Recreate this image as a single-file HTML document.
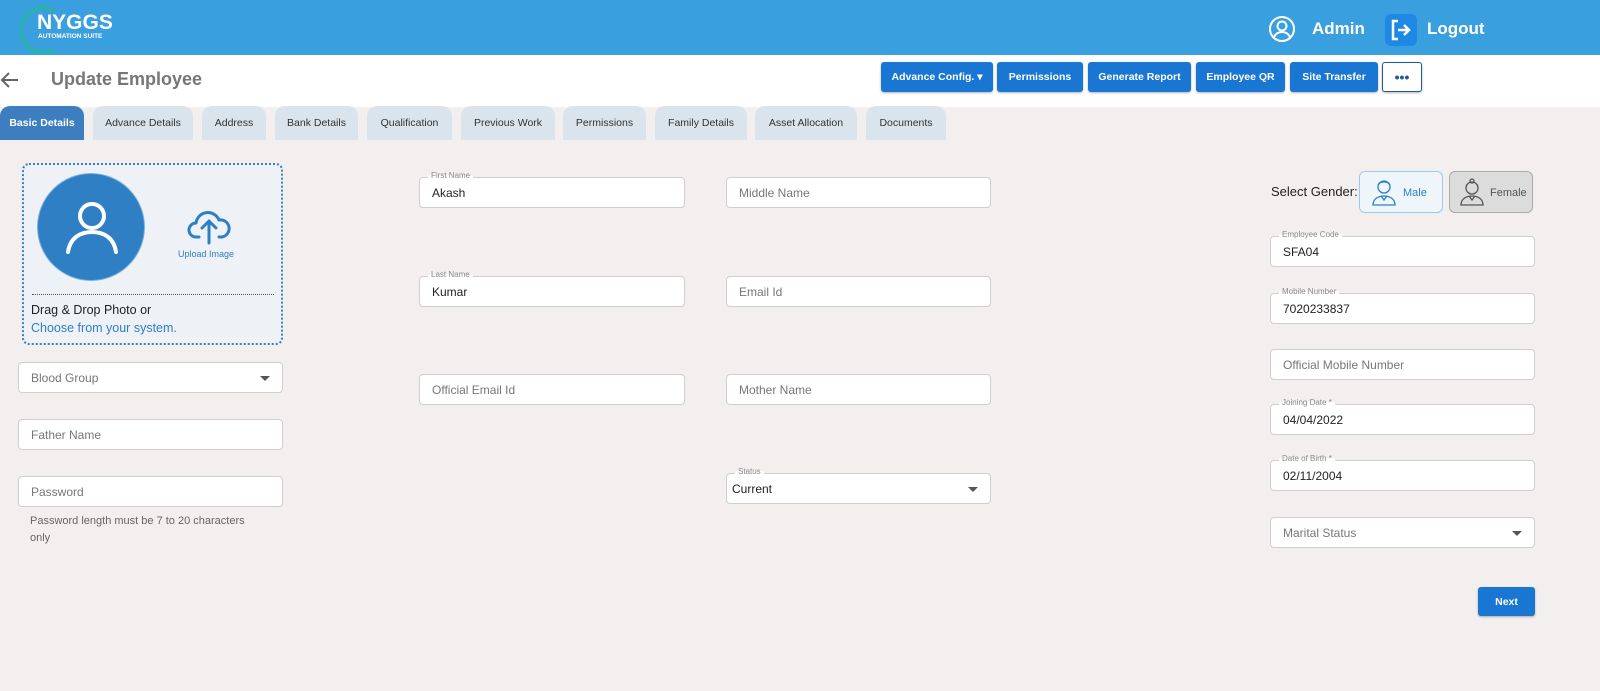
<!DOCTYPE html>
<html><head><meta charset="utf-8"><style>
*{box-sizing:border-box;margin:0;padding:0}
body{width:1600px;height:691px;overflow:hidden;background:#f4efef;font-family:"Liberation Sans",Arial,sans-serif;position:relative;color:#333}
.a{position:absolute}
.hdr{left:0;top:0;width:1600px;height:55px;background:#3a9fdf}
.band{left:0;top:55px;width:1600px;height:52px;background:#fff}
.btn{position:absolute;top:62px;height:30px;background:#1976d2;color:#fff;font-size:10.5px;font-weight:bold;border-radius:3px;display:flex;align-items:center;justify-content:center;box-shadow:0 1px 2px rgba(0,0,0,.3)}
.tab{position:absolute;top:106px;height:34px;background:#dae4ec;border-radius:10px 10px 0 0;font-size:10.5px;color:#333;display:flex;align-items:center;justify-content:center}
.in{position:absolute;height:31px;background:#fff;border:1px solid #cfcfcf;border-radius:4px;font-size:12px;color:#777;padding-left:12px;display:flex;align-items:center}
.in.v{color:#222}
.lbl{position:absolute;top:-7px;left:8px;font-size:8px;color:#888;background:linear-gradient(#f4efef 50%,#fff 50%);padding:0 3px}
.dd::after{content:"";position:absolute;right:12px;top:13px;border:5px solid transparent;border-top:5px solid #555}
</style></head><body>
<div class="a hdr"></div>
<svg class="a" style="left:20px;top:5px" width="40" height="48" viewBox="0 0 40 48"><path d="M34 6 A22 22 0 1 0 34 44" fill="none" stroke="#1ec27a" stroke-width="3" stroke-dasharray="4 2"/></svg>
<div class="a" style="left:37px;top:11px;color:#fff;font-size:21px;font-weight:bold">NYGGS</div>
<div class="a" style="left:38px;top:33px;color:#fff;font-size:6.5px;font-weight:bold">AUTOMATION SUITE</div>
<svg class="a" style="left:1268px;top:15px" width="28" height="28" viewBox="0 0 28 28" fill="none" stroke="#fff" stroke-width="2"><circle cx="14" cy="14" r="12"/><circle cx="14" cy="11" r="4.5"/><path d="M6 22c2-4 5-5 8-5s6 1 8 5"/></svg>
<div class="a" style="left:1312px;top:19px;color:#fff;font-size:17px;font-weight:bold">Admin</div>
<div class="a" style="left:1385px;top:14px;width:32px;height:32px;background:#1e88e5;border-radius:6px"></div>
<svg class="a" style="left:1389px;top:18px" width="24" height="24" viewBox="0 0 24 24" fill="none" stroke="#fff" stroke-width="2.5"><path d="M9 3H4v18h5M9 12h11M15 7l5 5-5 5"/></svg>
<div class="a" style="left:1427px;top:19px;color:#fff;font-size:17px;font-weight:bold">Logout</div>
<div class="a band"></div>
<svg class="a" style="left:0;top:70px" width="20" height="20" viewBox="0 0 20 20" fill="none" stroke="#666" stroke-width="2"><path d="M18 10H3M9 3l-7 7 7 7"/></svg>
<div class="a" style="left:51px;top:69px;font-size:18px;font-weight:bold;color:#777">Update Employee</div>
<div class="btn" style="left:881px;width:112px">Advance Config. ▾</div>
<div class="btn" style="left:997px;width:86px">Permissions</div>
<div class="btn" style="left:1088px;width:103px">Generate Report</div>
<div class="btn" style="left:1196px;width:89px">Employee QR</div>
<div class="btn" style="left:1290px;width:88px">Site Transfer</div>
<div class="btn" style="left:1382px;width:40px;background:#fff;border:1px solid #1f5b9a;color:#1f5b9a;font-size:14px">•••</div>
<div class="tab" style="left:0;width:84px;background:#3c7ebf;color:#fff;font-weight:bold">Basic Details</div>
<div class="tab" style="left:93px;width:100px">Advance Details</div>
<div class="tab" style="left:202px;width:64px">Address</div>
<div class="tab" style="left:275px;width:83px">Bank Details</div>
<div class="tab" style="left:367px;width:85px">Qualification</div>
<div class="tab" style="left:461px;width:94px">Previous Work</div>
<div class="tab" style="left:563px;width:83px">Permissions</div>
<div class="tab" style="left:655px;width:92px">Family Details</div>
<div class="tab" style="left:755px;width:102px">Asset Allocation</div>
<div class="tab" style="left:866px;width:80px">Documents</div>

<div class="a" style="left:22px;top:163px;width:261px;height:182px;background:#eef2f6;border:2px dotted #3c7ebf;border-radius:7px"></div>
<div class="a" style="left:37px;top:173px;width:108px;height:108px;border-radius:50%;background:#2e7fc4;border:1px solid #7fb2e0"></div>
<svg class="a" style="left:64px;top:200px" width="56" height="56" viewBox="0 0 56 56" fill="none" stroke="#fff" stroke-width="4" stroke-linecap="round"><circle cx="28" cy="16" r="12"/><path d="M4 52c2-14 12-20 24-20s22 6 24 20"/></svg>
<svg class="a" style="left:187px;top:207px" width="44" height="38" viewBox="0 0 44 38" fill="none" stroke="#2e7fc4" stroke-width="3" stroke-linecap="round" stroke-linejoin="round"><path d="M12 30H9a7 7 0 0 1 0-14 12 12 0 0 1 23-3 8 8 0 0 1 3 17h-3"/><path d="M22 36V15M15 21l7-7 7 7"/></svg>
<div class="a" style="left:178px;top:249px;font-size:9px;color:#2e7fc4">Upload Image</div>
<div class="a" style="left:32px;top:294px;width:242px;border-top:1px dotted #555"></div>
<div class="a" style="left:31px;top:303px;font-size:12.5px;color:#222">Drag &amp; Drop Photo or</div>
<div class="a" style="left:31px;top:321px;font-size:12.5px;color:#2e7fc4">Choose from your system.</div>

<div class="in dd" style="left:18px;top:362px;width:265px">Blood Group</div>
<div class="in" style="left:18px;top:419px;width:265px">Father Name</div>
<div class="in" style="left:18px;top:476px;width:265px">Password</div>
<div class="a" style="left:30px;top:513px;font-size:11px;color:#666;line-height:17px;width:225px">Password length must be 7 to 20 characters only</div>

<div class="in v" style="left:419px;top:177px;width:266px"><span class="lbl">First Name</span>Akash</div>
<div class="in" style="left:726px;top:177px;width:265px">Middle Name</div>
<div class="in v" style="left:419px;top:276px;width:266px"><span class="lbl">Last Name</span>Kumar</div>
<div class="in" style="left:726px;top:276px;width:265px">Email Id</div>
<div class="in" style="left:419px;top:374px;width:266px">Official Email Id</div>
<div class="in" style="left:726px;top:374px;width:265px">Mother Name</div>
<div class="in v dd" style="left:726px;top:473px;width:265px;padding-left:5px"><span class="lbl">Status</span>Current</div>

<div class="a" style="left:1271px;top:184px;font-size:13px;color:#222">Select Gender:</div>
<div class="a" style="left:1359px;top:171px;width:84px;height:42px;background:#eef6fc;border:1px solid #9cc8ea;border-radius:6px"></div>
<svg class="a" style="left:1371px;top:178px" width="26" height="28" viewBox="0 0 26 28" fill="none" stroke="#2e7fc4" stroke-width="1.3"><circle cx="13" cy="9" r="6"/><path d="M7 7c2-4 10-4 12 0M2 27c0-6 5-9 11-9s11 3 11 9zM10 18l3 4 3-4"/></svg>
<div class="a" style="left:1403px;top:187px;font-size:11px;color:#2e7fc4">Male</div>
<div class="a" style="left:1449px;top:171px;width:84px;height:42px;background:#dcdcdc;border:1px solid #aaa;border-radius:6px"></div>
<svg class="a" style="left:1459px;top:178px" width="26" height="28" viewBox="0 0 26 28" fill="none" stroke="#555" stroke-width="1.3"><circle cx="13" cy="10" r="6"/><circle cx="13" cy="3" r="2"/><path d="M2 27c0-6 5-9 11-9s11 3 11 9zM10 18l3 4 3-4"/></svg>
<div class="a" style="left:1490px;top:187px;font-size:11px;color:#555">Female</div>

<div class="in v" style="left:1270px;top:236px;width:265px"><span class="lbl">Employee Code</span>SFA04</div>
<div class="in v" style="left:1270px;top:293px;width:265px"><span class="lbl">Mobile Number</span>7020233837</div>
<div class="in" style="left:1270px;top:349px;width:265px">Official Mobile Number</div>
<div class="in v" style="left:1270px;top:404px;width:265px"><span class="lbl">Joining Date *</span>04/04/2022</div>
<div class="in v" style="left:1270px;top:460px;width:265px"><span class="lbl">Date of Birth *</span>02/11/2004</div>
<div class="in dd" style="left:1270px;top:517px;width:265px">Marital Status</div>
<div class="btn" style="left:1478px;top:587px;width:57px;height:29px">Next</div>
</body></html>
